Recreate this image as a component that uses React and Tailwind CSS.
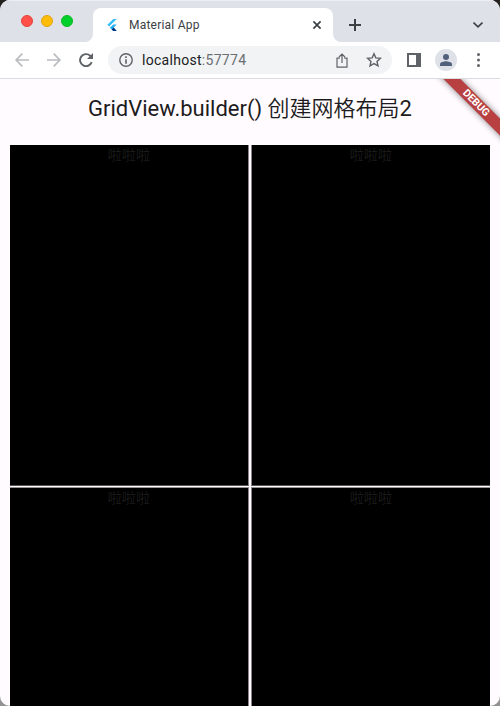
const stroke = { fill: "none", stroke: "currentColor" };

function TabStrip() {
  return (
    <div className="relative flex h-[42px] shrink-0 border-t border-[#eceef2] bg-[#dee1e8]">
      <div className="flex w-[85px] shrink-0 gap-2 pl-[21px] pt-[14px]">
        <span className="size-3 rounded-full border border-[#e2423b] bg-[#ff4f48]" />
        <span className="size-3 rounded-full border border-[#e0a30d] bg-[#ffbd08]" />
        <span className="size-3 rounded-full border border-[#0eb625] bg-[#00d02b]" />
      </div>
      <svg className="mt-auto size-2 shrink-0" viewBox="0 0 8 8">
        <path d="M8 0v8H0a8 8 0 0 0 8-8" fill="#fff" />
      </svg>
      <div className="mt-[7px] flex w-[240px] shrink-0 items-center rounded-t-lg bg-white pb-px pl-[14px] pr-[11px]">
        <svg className="mr-[10px] h-3 w-3 shrink-0" viewBox="0 0 12 12">
          <path d="M6.3 0H9.7L2.1 7.5.4 5.8Z" fill="#35bdf8" />
          <path d="M6.3 5.5h3.4L6.6 8.6 9.7 12H6.3L2.9 8.7Z" fill="#22aef5" />
          <path d="M4.7 10.4 6.6 8.6 9.7 12H6.3Z" fill="#04307f" />
        </svg>
        <span className="grow text-[12px] tracking-[0.22px] text-[#3c4043]">Material App</span>
        <svg className="size-[10px] text-[#3c4043]" viewBox="0 0 10 10" {...stroke} strokeWidth="1.7">
          <path d="m1.4 1.4 7.2 7.2m0-7.2L1.4 8.6" />
        </svg>
      </div>
      <svg className="mt-auto size-2 shrink-0" viewBox="0 0 8 8">
        <path d="M0 0v8h8a8 8 0 0 1-8-8" fill="#fff" />
      </svg>
      <svg className="ml-[8px] mt-[18px] size-3 text-[#3c4043]" viewBox="0 0 12 12" {...stroke} strokeWidth="2">
        <path d="M6 0v12M0 6h12" />
      </svg>
      <svg className="ml-auto mr-[17px] mt-[20px] h-2 w-[10px] text-[#3c4043]" viewBox="0 0 10 8" {...stroke} strokeWidth="1.7">
        <path d="m.5 1.5 4.5 4.4 4.5-4.4" />
      </svg>
    </div>
  );
}

function Toolbar() {
  return (
    <div className="flex h-[37px] shrink-0 items-center border-b border-[#dadce0] bg-white text-[#5f6368]">
      <svg className="ml-[15px] size-[14px] text-[#b9bbbe]" viewBox="0 0 14 14" {...stroke} strokeWidth="1.7">
        <path d="M14 7H1.3M7.3.7 1.1 7l6.2 6.3" />
      </svg>
      <svg className="ml-[18px] size-[14px] text-[#b9bbbe]" viewBox="0 0 14 14" {...stroke} strokeWidth="1.7">
        <path d="M0 7h12.7M6.7.7 12.9 7l-6.2 6.3" />
      </svg>
      <svg className="ml-[18px] size-[14px]" viewBox="0 0 14 14">
        <path d="M12.7 9.2A6 6 0 1 1 11.2 2.8L12.4 4" fill="none" stroke="currentColor" strokeWidth="1.9" />
        <path d="M14 0v6H8Z" fill="currentColor" />
      </svg>
      <div className="ml-[15px] flex h-7 w-[284px] items-center rounded-full bg-[#f1f3f4] pl-[11px] pr-[10px]">
        <svg className="size-[14px]" viewBox="0 0 14 14">
          <circle cx="7" cy="7" r="6.2" fill="none" stroke="currentColor" strokeWidth="1.4" />
          <path d="M6.2 6.2h1.6v4.5H6.2zM6.2 3.3h1.6v1.6H6.2z" fill="currentColor" />
        </svg>
        <span className="ml-[9px] grow text-[14px] leading-5 tracking-[0.29px] text-[#202124]">
          localhost<span className="text-[#6b6e72]">:57774</span>
        </span>
        <svg className="h-[15px] w-3" viewBox="0 0 12 15" {...stroke} strokeWidth="1.2">
          <path d="M3.8 5.2H1v9h10v-9H8.2M6 10V1.2M3 4l3-3 3 3" />
        </svg>
        <svg className="ml-[18px] size-[16px]" viewBox="0 0 16 16" {...stroke} strokeWidth="1.4">
          <path d="m8 1.8 1.8 4.1 4.6.4L11 9.4l1 4.5-4-2.3-4 2.3 1-4.5-3.4-3.1 4.6-.4Z" />
        </svg>
      </div>
      <svg className="ml-[15px] size-[14px]" viewBox="0 0 14 14" fill="currentColor">
        <path fillRule="evenodd" d="M0 0h14v14H0zM2 2v10h7V2z" />
      </svg>
      <div className="ml-[14px] flex size-[22px] items-center justify-center rounded-full bg-[#dee1e8]">
        <svg className="h-3 w-3 text-[#52617b]" viewBox="0 0 12 12" fill="currentColor">
          <circle cx="6" cy="3" r="3" />
          <path d="M0 12v-1.8C0 8.2 4 7.3 6 7.3s6 .9 6 2.9V12Z" />
        </svg>
      </div>
      <svg className="ml-[20px] h-[14px] w-[3px]" viewBox="0 0 3 14" fill="currentColor">
        <circle cx="1.5" cy="1.6" r="1.5" />
        <circle cx="1.5" cy="7" r="1.5" />
        <circle cx="1.5" cy="12.4" r="1.5" />
      </svg>
    </div>
  );
}

function Tile({ edges }) {
  return (
    <div className={`bg-black text-center font-['Roboto','Noto_Sans_CJK_SC',sans-serif] text-[14px] font-light leading-5 tracking-[0.25px] text-[#232323] ${edges}`}>
      啦啦啦
    </div>
  );
}

export default function App() {
  return (
    <div className="h-[706px] w-[500px] overflow-hidden bg-[linear-gradient(to_bottom,#24211f_50%,#929292_50%)]">
      <div className="flex h-full flex-col overflow-hidden rounded-[10px] bg-[#fffbff] font-['Roboto',sans-serif]">
        <TabStrip />
        <Toolbar />
        <main className="relative flex min-h-0 grow flex-col overflow-hidden">
          <h1 className="flex h-[66px] shrink-0 items-center justify-center pb-[7px] font-['Roboto','Noto_Sans_CJK_SC',sans-serif] text-[22px] font-normal leading-7 text-[#1d1b20]">
            <span>GridView.builder() <span className="font-[350]">创建网格布局</span>2</span>
          </h1>
          <div className="mx-[10px] grid shrink-0 grid-cols-[239px_239px] grid-rows-[341px_341px] gap-x-[2px] gap-y-px">
            <Tile edges="border-r border-b border-r-[#8b8489] border-b-[#555254]" />
            <Tile edges="border-l border-b border-l-[#8b8489] border-b-[#555254]" />
            <Tile edges="border-r border-t border-r-[#8b8489] border-t-[#999498]" />
            <Tile edges="border-l border-t border-l-[#8b8489] border-t-[#999498]" />
          </div>
          <div className="absolute right-[-26px] top-[17.5px] flex h-[12px] w-[100px] rotate-45 items-center justify-center bg-[#b84041] text-[10.4px] font-bold leading-none text-white shadow-[0_0_6px_rgba(0,0,0,0.5)]">
            DEBUG
          </div>
        </main>
      </div>
    </div>
  );
}
